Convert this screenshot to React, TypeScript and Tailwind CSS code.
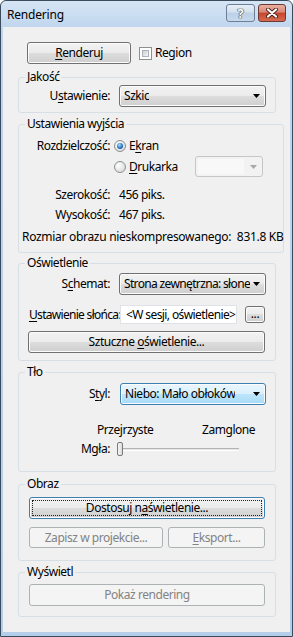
import React from "react";

const btn =
  "flex items-center justify-center rounded-[3px] border border-[#707070] bg-[linear-gradient(#f2f2f2_0%,#ebebeb_50%,#dddddd_50%,#cfcfcf_100%)] shadow-[inset_0_0_0_1px_#fcfcfc]";
const btnOff =
  "flex items-center justify-center rounded-[3px] border border-[#adb2b5] bg-[#f4f4f4] text-[#838383]";
const comboHot =
  "flex items-center rounded-[3px] border border-[#3c7fb1] bg-[linear-gradient(#eaf6fd_0%,#d9f0fc_50%,#bee6fd_50%,#a7d9f5_100%)] shadow-[inset_0_0_0_1px_#fcfcfc]";

function U({ children }: { children: React.ReactNode }) {
  return <span className="underline underline-offset-[2px] decoration-1">{children}</span>;
}

function Group({
  label,
  className,
  children,
}: {
  label: string;
  className: string;
  children: React.ReactNode;
}) {
  return (
    <fieldset className={"rounded-[3px] border border-[#d5dfe5] " + className}>
      <legend className="ml-[6px] px-[2px] leading-[16px]">{label}</legend>
      {children}
    </fieldset>
  );
}

function Arrow({ color = "#000" }: { color?: string }) {
  return (
    <svg width="7" height="4" viewBox="0 0 7 4" className="shrink-0">
      <polygon points="0,0 7,0 3.5,4" fill={color} />
    </svg>
  );
}

function Combo({
  children,
  hot,
  className,
}: {
  children: React.ReactNode;
  hot?: boolean;
  className: string;
}) {
  return (
    <div
      className={
        (hot ? comboHot : btn) +
        " !justify-between pl-[4px] pr-[5px] h-[22px] gap-[3px] " +
        className
      }
    >
      <span className="whitespace-nowrap overflow-hidden min-w-0">{children}</span>
      <Arrow />
    </div>
  );
}

function Radio({ checked }: { checked?: boolean }) {
  return (
    <div className="w-[12px] h-[12px] rounded-full border border-[#8e8f8f] bg-[radial-gradient(circle_at_35%_35%,#ffffff,#cfd1d3)] flex items-center justify-center shrink-0">
      {checked && (
        <div className="w-[6px] h-[6px] rounded-full bg-[radial-gradient(circle_at_40%_35%,#a8e6ff,#2a6fc4_55%,#143f82)]" />
      )}
    </div>
  );
}

export default function App() {
  return (
    <div className="w-[293px] h-[637px] flex flex-col border border-[#3b4b5e] rounded-t-[6px] bg-[linear-gradient(#d6e5f5,#c0d6ee_26px,#b4cde9)] font-['Noto_Sans',sans-serif] text-[12px] leading-[16px] text-black tracking-[-0.45px] overflow-hidden">
      {/* title bar */}
      <div className="h-[26px] flex items-start shrink-0">
        <div className="pl-[6px] pt-[6px] flex-1 tracking-[-0.2px]">Rendering</div>
        <div className="flex gap-[3px] mt-[3px] mr-[6px]">
          <div className="w-[29px] h-[18px] rounded-[3px] border border-[#6d7f96] bg-[linear-gradient(#e6eef7,#d3e0ee_45%,#bdd0e6_50%,#c8d9ec)] flex items-center justify-center text-white font-bold text-[13px] [text-shadow:0_0_1px_#233,0_0_1px_#233,0_0_1px_#233]">
            ?
          </div>
          <div className="w-[28px] h-[18px] rounded-[3px] border border-[#6b3a35] bg-[linear-gradient(#eab0a3,#d98676_45%,#c5452c_50%,#d66a50)] flex items-center justify-center">
            <svg width="12" height="10" viewBox="0 0 12 10">
              <path d="M2 1.5 L10 8.5 M10 1.5 L2 8.5" stroke="#4a1f18" strokeWidth="4" strokeLinecap="round" />
              <path d="M2 1.5 L10 8.5 M10 1.5 L2 8.5" stroke="#fff" strokeWidth="2.2" strokeLinecap="round" />
            </svg>
          </div>
        </div>
      </div>

      {/* client area */}
      <div className="flex-1 mx-[2px] mb-[4px] bg-[#f0f0f0] flex flex-col pl-[15px] pr-[14px]">
        <div className="flex items-center mt-[15px] h-[22px]">
          <div className={btn + " ml-[9px] w-[104px] h-[22px]"}>
            <span>
              <U>R</U>enderuj
            </span>
          </div>
          <div className="ml-[8px] w-[13px] h-[13px] border border-[#8e8f8f] bg-white p-[2px]">
            <div className="w-full h-full border border-[#aeb3b9] bg-[linear-gradient(135deg,#cbcfd5,#f6f6f6)]" />
          </div>
          <span className="ml-[3px]">Region</span>
        </div>

        <Group label="Jakość" className="mt-[5px] pb-[5px]">
          <div className="flex items-center">
            <span className="w-[91px] text-right">
              U<U>s</U>tawienie:
            </span>
            <Combo className="ml-[9px] w-[147px]">Szkic</Combo>
          </div>
        </Group>

        <Group label="Ustawienia wyjścia" className="mt-[3px] pb-[5px]">
          <div className="flex items-center h-[20px] mt-[4px]">
            <span className="w-[91px] text-right">Rozdzielczość:</span>
            <div className="ml-[4px]">
              <Radio checked />
            </div>
            <span className="ml-[3px]">
              E<U>k</U>ran
            </span>
          </div>
          <div className="flex items-center h-[21px]">
            <div className="ml-[95px]">
              <Radio />
            </div>
            <span className="ml-[3px] w-[66px]">
              <U>D</U>rukarka
            </span>
            <div className="w-[68px] h-[21px] rounded-[3px] border border-[#c3c7ca] bg-[#f2f2f2] flex items-center pl-[2px] pr-[5px] justify-between">
              <div className="w-[46px] h-[15px] bg-[#f8f8f8]" />
              <Arrow color="#a9a9a9" />
            </div>
          </div>
          <div className="flex items-center h-[20px] mt-[8px]">
            <span className="w-[91px] text-right">Szerokość:</span>
            <span className="ml-[9px]">456 piks.</span>
          </div>
          <div className="flex items-center h-[20px]">
            <span className="w-[91px] text-right">Wysokość:</span>
            <span className="ml-[9px]">467 piks.</span>
          </div>
          <div className="flex items-center h-[20px] mt-[2px] pl-[3px] whitespace-nowrap tracking-[-0.3px]">
            Rozmiar obrazu nieskompresowanego:&nbsp;&nbsp;831.8 KB
          </div>
        </Group>

        <Group label="Oświetlenie" className="mt-[2px] pb-[7px]">
          <div className="flex items-center mt-[2px]">
            <span className="w-[91px] text-right">
              S<U>c</U>hemat:
            </span>
            <Combo className="ml-[9px] w-[147px] tracking-[-0.65px]">Strona zewnętrzna: słone</Combo>
          </div>
          <div className="flex items-center h-[19px] mt-[10px] pl-[10px]">
            <span className="w-[89px] whitespace-nowrap tracking-[-0.7px]">
              <U>U</U>stawienie słońca:
            </span>
            <div className="ml-[2px] w-[117px] h-[19px] border border-[#dfe3e8] bg-white flex items-center pl-[5px] whitespace-nowrap tracking-[-0.6px]">
              &lt;W sesji, oświetlenie&gt;
            </div>
            <div className={btn + " ml-[8px] w-[20px] h-[17px] !items-end pb-[3px] leading-[10px]"}>
              ...
            </div>
          </div>
          <div className={btn + " mt-[7px] ml-[9px] w-[237px] h-[22px]"}>
            <span>
              Sztuczne <U>o</U>świetlenie...
            </span>
          </div>
        </Group>

        <Group label="Tło" className="mt-[3px] pb-[14px]">
          <div className="flex items-center mt-[3px]">
            <span className="w-[91px] text-right">
              S<U>t</U>yl:
            </span>
            <Combo hot className="ml-[10px] w-[146px]">
              Niebo: Mało obłoków
            </Combo>
          </div>
          <div className="flex mt-[17px] pl-[78px]">
            <span className="w-[105px]">Przejrzyste</span>
            <span>Zamglone</span>
          </div>
          <div className="flex items-center h-[16px] mt-[3px]">
            <span className="w-[91px] text-right">Mgła:</span>
            <div className="ml-[7px] w-[122px] flex items-center">
              <div className="w-[6px] h-[14px] rounded-[2px] border border-[#7a7a7a] bg-[linear-gradient(90deg,#f4f4f4,#dcdcdc)] shrink-0" />
              <div className="flex-1 h-[3px] border-t border-[#b4b4b4] border-b border-b-white bg-[#e2e4e6]" />
            </div>
          </div>
        </Group>

        <Group label="Obraz" className="mt-[4px] pb-[12px]">
          <div
            className={
              btn +
              " mt-[5px] ml-[10px] w-[236px] h-[22px] !border-[#3c7fb1] shadow-[inset_0_0_0_1px_#9fe0fb] p-[2px]"
            }
          >
            <div className="w-full h-full border border-dotted border-[#222] flex items-center justify-center">
              <span>
                Dostosuj n<U>a</U>świetlenie...
              </span>
            </div>
          </div>
          <div className="flex mt-[8px] ml-[10px]">
            <div className={btnOff + " w-[134px] h-[21px]"}>Zapisz w projekcie...</div>
            <div className={btnOff + " ml-[5px] w-[97px] h-[21px]"}>
              <span>
                <U>E</U>ksport...
              </span>
            </div>
          </div>
        </Group>

        <Group label="Wyświetl" className="mt-[3px] pb-[10px]">
          <div className={btnOff + " mt-[4px] ml-[10px] w-[236px] h-[22px]"}>Pokaż rendering</div>
        </Group>
      </div>
    </div>
  );
}
